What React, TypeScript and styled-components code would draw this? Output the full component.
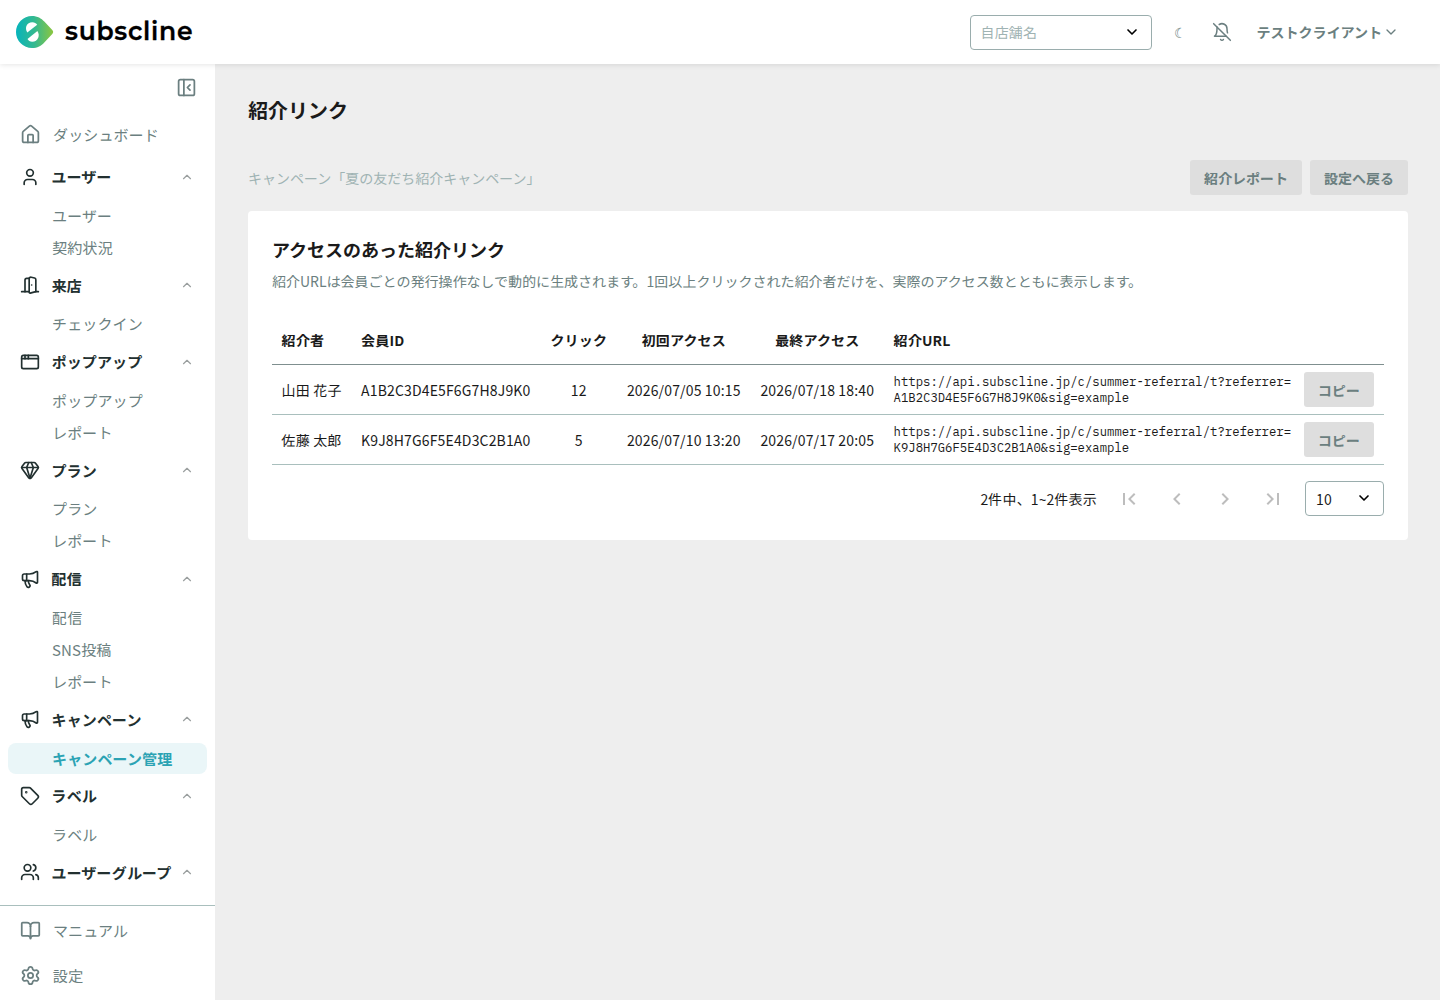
import React from 'react';
import styled, { createGlobalStyle, css } from 'styled-components';
import {
  AppWindow, BookOpen, ChevronDown, ChevronUp, DoorOpen, Gem, House, Megaphone,
  PanelLeftClose, Settings, Tag, User, Users, type LucideIcon,
} from 'lucide-react';
import { MdFirstPage, MdKeyboardArrowLeft, MdKeyboardArrowRight, MdLastPage } from 'react-icons/md';

const color = {
  text: '#1a1a1a',
  heading: '#223030',
  muted: '#6b7f80',
  faint: '#9fb3b3',
  line: '#a9bfbd',
  canvas: '#eeeeee',
  accent: '#2ba3b4',
  accentSoft: '#eaf6f8',
};

const GlobalStyle = createGlobalStyle`
  *, *::before, *::after { box-sizing: border-box; }
  body {
    margin: 0;
    background: ${color.canvas};
    color: ${color.text};
    font-family: "Noto Sans JP", "Noto Sans CJK JP", "Noto Sans", sans-serif;
    font-size: 14px;
    line-height: 1.5;
  }
  h1, h2, p { margin: 0; }
  button { font: inherit; color: inherit; border: 0; background: none; padding: 0; cursor: pointer; }
  svg { flex: none; }
`;

const Page = styled.div`
  display: grid;
  grid-template: 64px minmax(0, 1fr) / 215px minmax(0, 1fr);
  height: 1000px;
`;

const Header = styled.header`
  grid-column: 1 / -1;
  z-index: 1;
  display: flex;
  align-items: center;
  justify-content: space-between;
  padding: 0 41px 0 16px;
  background: #fff;
  box-shadow: 0 1px 5px rgba(0, 0, 0, 0.1);
`;

const Brand = styled.div`
  display: flex;
  align-items: center;
  gap: 11px;
`;

const Wordmark = styled.span`
  font: 600 25px/30px Montserrat, "Open Sans", sans-serif;
  letter-spacing: 0.75px;
  color: #000;
  -webkit-text-stroke: 0.3px #000;
  margin-top: -2px;
`;

const HeaderTools = styled.div`
  display: flex;
  align-items: center;
`;

const Select = styled.button<{ $width: number; $placeholder?: boolean }>`
  display: flex;
  align-items: center;
  justify-content: space-between;
  width: ${p => p.$width}px;
  height: 35px;
  padding: 1px 11px 0 10px;
  border: 1px solid #9aadad;
  border-radius: 4px;
  background: #fff;
  color: ${p => (p.$placeholder ? color.faint : color.text)};
  letter-spacing: 0.01071em;

  svg { color: #000; margin-top: -2px; }
`;

const Moon = styled.button`
  width: 16px;
  margin-left: 21px;
  color: ${color.muted};
  font-size: 14px;
`;

const Bell = styled.button`
  display: flex;
  margin-left: 23px;
  color: ${color.muted};
`;

const Account = styled.button`
  display: flex;
  align-items: center;
  gap: 1px;
  margin-left: 25px;
  color: ${color.muted};
  font-weight: 700;
`;

const Sidebar = styled.aside`
  display: flex;
  flex-direction: column;
  min-height: 0;
  background: #fff;
  font-size: 15px;
  letter-spacing: 0.00938em;
`;

const CollapseRow = styled.div`
  display: flex;
  justify-content: flex-end;
  padding: 13px 18px 0 0;
  height: 48px;
  color: ${color.muted};
`;

const Nav = styled.nav`
  flex: 1;
  min-height: 0;
  overflow: hidden;
`;

const NavLink = styled.a`
  display: flex;
  align-items: center;
  gap: 12px;
  height: 45px;
  padding: 0 0 1px 20px;
  color: ${color.muted};

  span { padding-top: 2px; }
`;

const GroupHeader = styled.div`
  display: flex;
  align-items: center;
  gap: 11.500px;
  height: 44.500px;
  padding: 0 21px 2.600px 20px;
  color: ${color.heading};
  font-weight: 700;

  span { flex: 1; min-width: 0; padding-top: 1px; white-space: nowrap; }
  svg:last-child { flex: none; margin-left: -8px; color: #9a9f9f; }
`;

const SubItem = styled.a<{ $active?: boolean }>`
  display: flex;
  align-items: center;
  height: 31px;
  margin: 0 8px 1px;
  padding-left: 44px;
  border-radius: 8px;
  color: ${color.muted};
  ${p => p.$active && css`
    padding-top: 1px;
    background: ${color.accentSoft};
    color: ${color.accent};
    font-weight: 700;
  `}
`;

const Dashboard = styled(NavLink)`
  height: 44px;
  padding-bottom: 0;
`;

const SidebarFooter = styled.div`
  height: 95px;
  padding-top: 2px;
  border-top: 1px solid ${color.line};
`;

const Main = styled.main`
  padding: 31px 32px 0 33px;
`;

const PageTitle = styled.h1`
  font-size: 20px;
  line-height: 30px;
`;

const Toolbar = styled.div`
  display: flex;
  align-items: center;
  justify-content: space-between;
  margin: 35px 0 16px;
`;

const Campaign = styled.p`
  padding-top: 2px;
  color: ${color.faint};
`;

const Actions = styled.div`
  display: flex;
  gap: 8px;
`;

const Button = styled.button`
  height: 35px;
  padding: 2px 14px 0;
  border-radius: 3px;
  background: #dedede;
  color: ${color.muted};
  font-weight: 700;
  white-space: nowrap;
`;

const Card = styled.section`
  height: 329px;
  padding: 24px;
  border-radius: 4px;
  background: #fff;
`;

const CardTitle = styled.h2`
  font-size: 18px;
  line-height: 28px;
`;

const Description = styled.p`
  margin-top: 8px;
  line-height: 21px;
  color: ${color.muted};
`;

const Table = styled.table`
  width: 100%;
  margin-top: 24px;
  border-collapse: separate;
  border-spacing: 0;
  table-layout: fixed;
  letter-spacing: 0.01071em;
`;

const Col = styled.col<{ $width: number }>`
  width: ${p => p.$width}px;
`;

const HeadCell = styled.th<{ $center?: boolean }>`
  height: 49px;
  padding: 0 9.600px;
  border-bottom: 1px solid #7f8f8f;
  text-align: ${p => (p.$center ? 'center' : 'left')};
  white-space: nowrap;
`;

const Cell = styled.td<{ $center?: boolean }>`
  height: 50px;
  padding: 2px 9.600px 0;
  border-bottom: 1px solid ${color.line};
  text-align: ${p => (p.$center ? 'center' : 'left')};
  white-space: nowrap;
`;

const FlushCell = styled(Cell)`
  padding-top: 0;

  button { display: block; letter-spacing: 0; }
`;

const Url = styled.code`
  display: block;
  margin-top: -2px;
  font: 12.250px/16px "IBM Plex Mono", "Liberation Mono", monospace;
  letter-spacing: 0.01px;
`;

const Pagination = styled.div`
  display: flex;
  align-items: center;
  justify-content: flex-end;
  margin-top: 16px;
`;

const Count = styled.span`
  padding-top: 1px;
  letter-spacing: 0.01071em;
`;

const Pager = styled.div`
  display: flex;
  gap: 24px;
  margin: 0 20.500px 0 19.500px;
  color: #bdbdbd;

  button { display: flex; }
`;

const Logo = () => (
  <svg width="38" height="32" viewBox="0 0 38 32">
    <defs>
      <linearGradient id="brand" x1="0" y1="0" x2="1" y2="0">
        <stop offset="0" stopColor="#06b4bc" />
        <stop offset="0.5" stopColor="#35b98f" />
        <stop offset="1" stopColor="#8cc63f" />
      </linearGradient>
    </defs>
    <path d="M16 0c5.500 0 9.300 2.300 12.300 5.600l8.200 8.700q1.500 1.700 0 3.400l-8.200 8.700C25.300 29.700 21.500 32 16 32A16 16 0 0 1 16 0Z" fill="url(#brand)" />
    <path d="M11.300 16.600C8.300 12.200 10.600 6.300 16.300 6.300c2.200 0 3.900 .9 4.900 2.400Z" fill="#fff" />
    <path d="M21.400 15.100c3 4.400 .7 10.700-5.200 10.700-2.200 0-3.900-1.100-4.700-2.700Z" fill="#fff" />
  </svg>
);

const BellOffIcon = () => (
  <svg width="20" height="20" viewBox="0 0 24 24" fill="none" stroke="currentColor" strokeWidth="1.800" strokeLinecap="round" strokeLinejoin="round">
    <path d="M8.700 3A6 6 0 0 1 18 8a21.300 21.300 0 0 0 .6 5" />
    <path d="M17 17H3s3-2 3-9a4.670 4.670 0 0 1 .3-1.700" />
    <path d="M10.300 21a1.940 1.940 0 0 0 3.400 0" />
    <path d="m2 2 20 20" />
  </svg>
);

type Group = { label: string; icon: LucideIcon; items: string[] };

const groups: Group[] = [
  { label: 'ユーザー', icon: User, items: ['ユーザー', '契約状況'] },
  { label: '来店', icon: DoorOpen, items: ['チェックイン'] },
  { label: 'ポップアップ', icon: AppWindow, items: ['ポップアップ', 'レポート'] },
  { label: 'プラン', icon: Gem, items: ['プラン', 'レポート'] },
  { label: '配信', icon: Megaphone, items: ['配信', 'SNS投稿', 'レポート'] },
  { label: 'キャンペーン', icon: Megaphone, items: ['キャンペーン管理'] },
  { label: 'ラベル', icon: Tag, items: ['ラベル'] },
  { label: 'ユーザーグループ', icon: Users, items: [] },
];

const rows = [
  { name: '山田 花子', id: 'A1B2C3D4E5F6G7H8J9K0', clicks: 12, first: '2026/07/05 10:15', last: '2026/07/18 18:40' },
  { name: '佐藤 太郎', id: 'K9J8H7G6F5E4D3C2B1A0', clicks: 5, first: '2026/07/10 13:20', last: '2026/07/17 20:05' },
];

const columns = [
  { label: '紹介者', width: 79.5 },
  { label: '会員ID', width: 189 },
  { label: 'クリック', width: 76.5, center: true },
  { label: '初回アクセス', width: 133.5, center: true },
  { label: '最終アクセス', width: 133.5, center: true },
  { label: '紹介URL', width: 410.5 },
  { label: '', width: 89.5 },
];

export default function App() {
  return (
    <Page>
      <GlobalStyle />
      <Header>
        <Brand>
          <Logo />
          <Wordmark>subscline</Wordmark>
        </Brand>
        <HeaderTools>
          <Select $width={182} $placeholder>自店舗名<ChevronDown size={16} strokeWidth={2.5} /></Select>
          <Moon>☾</Moon>
          <Bell><BellOffIcon /></Bell>
          <Account>テストクライアント<ChevronDown size={16} strokeWidth={2} /></Account>
        </HeaderTools>
      </Header>
      <Sidebar>
        <CollapseRow><PanelLeftClose size={21} /></CollapseRow>
        <Nav>
          <Dashboard><House size={21} /><span>ダッシュボード</span></Dashboard>
          {groups.map(({ label, icon: Icon, items }) => (
            <React.Fragment key={label}>
              <GroupHeader>
                <Icon size={20} />
                <span>{label}</span>
                <ChevronUp size={14} />
              </GroupHeader>
              {items.map(item => (
                <SubItem key={item} $active={item === 'キャンペーン管理'}>{item}</SubItem>
              ))}
            </React.Fragment>
          ))}
        </Nav>
        <SidebarFooter>
          <NavLink><BookOpen size={21} /><span>マニュアル</span></NavLink>
          <NavLink><Settings size={21} /><span>設定</span></NavLink>
        </SidebarFooter>
      </Sidebar>
      <Main>
        <PageTitle>紹介リンク</PageTitle>
        <Toolbar>
          <Campaign>キャンペーン「夏の友だち紹介キャンペーン」</Campaign>
          <Actions>
            <Button>紹介レポート</Button>
            <Button>設定へ戻る</Button>
          </Actions>
        </Toolbar>
        <Card>
          <CardTitle>アクセスのあった紹介リンク</CardTitle>
          <Description>紹介URLは会員ごとの発行操作なしで動的に生成されます。1回以上クリックされた紹介者だけを、実際のアクセス数とともに表示します。</Description>
          <Table>
            <colgroup>{columns.map((c, i) => <Col key={i} $width={c.width} />)}</colgroup>
            <thead>
              <tr>{columns.map((c, i) => <HeadCell key={i} $center={c.center}>{c.label}</HeadCell>)}</tr>
            </thead>
            <tbody>
              {rows.map(r => (
                <tr key={r.id}>
                  <Cell>{r.name}</Cell>
                  <Cell>{r.id}</Cell>
                  <Cell $center>{r.clicks}</Cell>
                  <Cell $center>{r.first}</Cell>
                  <Cell $center>{r.last}</Cell>
                  <FlushCell><Url>https://api.subscline.jp/c/summer-referral/t?referrer=<br />{r.id}&amp;sig=example</Url></FlushCell>
                  <FlushCell><Button>コピー</Button></FlushCell>
                </tr>
              ))}
            </tbody>
          </Table>
          <Pagination>
            <Count>2件中、1~2件表示</Count>
            <Pager>
              <button><MdFirstPage size={24} /></button>
              <button><MdKeyboardArrowLeft size={24} /></button>
              <button><MdKeyboardArrowRight size={24} /></button>
              <button><MdLastPage size={24} /></button>
            </Pager>
            <Select $width={79}>10<ChevronDown size={16} strokeWidth={2.5} /></Select>
          </Pagination>
        </Card>
      </Main>
    </Page>
  );
}
